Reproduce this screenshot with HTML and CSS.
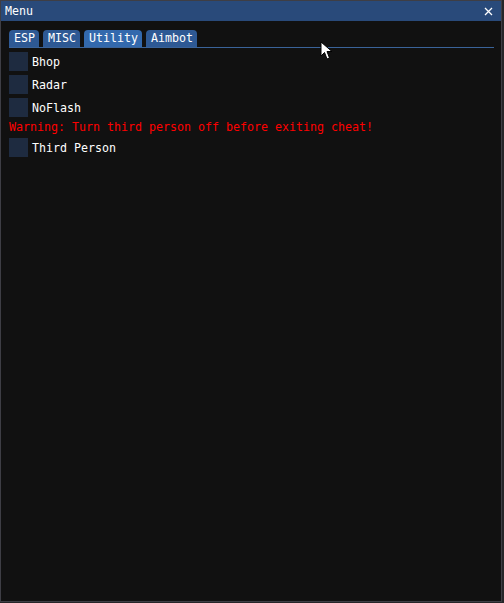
FILE: index.html
```html
<!DOCTYPE html>
<html>
<head>
<meta charset="utf-8">
<link rel="stylesheet" href="styles.css">
</head>
<body>
<div class="window">
  <div class="titlebar">
    <span class="title">Menu</span>
    <svg class="close" width="9" height="9" viewBox="0 0 9 9"><path d="M1 1L8 8M8 1L1 8" stroke="#fff" stroke-width="1.3"/></svg>
  </div>
  <div class="content">
    <div class="tabbar">
      <div class="tab">ESP</div>
      <div class="tab">MISC</div>
      <div class="tab active">Utility</div>
      <div class="tab">Aimbot</div>
    </div>
    <div class="items">
      <div class="row"><span class="box"></span><span>Bhop</span></div>
      <div class="row"><span class="box"></span><span>Radar</span></div>
      <div class="row"><span class="box"></span><span>NoFlash</span></div>
      <div class="warn">Warning: Turn third person off before exiting cheat!</div>
      <div class="row"><span class="box"></span><span>Third Person</span></div>
    </div>
  </div>
  <svg class="cursor" width="14" height="20" viewBox="0 0 14 20"><path d="M1 1L1 15L4.5 11.5L7 18L9.5 17L7 10.5L12 10.5Z" fill="#fff" stroke="#000" stroke-width="1"/></svg>
</div>
</body>
</html>
```
FILE: styles.css
```css
html, body {
  margin: 0;
  padding: 0;
  background: #262629;
}
body {
  width: 504px;
  height: 603px;
  overflow: hidden;
  font-family: "DejaVu Sans Mono", "Liberation Mono", monospace;
  font-size: 11.63px;
  color: #ffffff;
}
.window {
  position: relative;
  width: 502px;
  height: 602px;
  box-sizing: border-box;
  border: 1px solid #3e3e45;
  background: #111111;
  display: flex;
  flex-direction: column;
}
.titlebar {
  height: 20px;
  background: #294a7a;
  display: flex;
  align-items: center;
  justify-content: space-between;
  padding: 0 8px 0 4px;
  flex-shrink: 0;
}
.title {
  line-height: 13px;
}
.close {
  display: block;
}
.content {
  padding: 8px 7px 8px 8px;
  display: flex;
  flex-direction: column;
}
.tabbar {
  display: flex;
  gap: 4px;
  height: 18px;
  align-items: flex-end;
  border-bottom: 1px solid #3a6399;
}
.tab {
  height: 17px;
  line-height: 17px;
  padding: 0 4px 0 5px;
  background: #2e5994;
  border-radius: 4px 4px 0 0;
  white-space: nowrap;
}
.tab.active {
  background: #3369ad;
}
.items {
  display: flex;
  flex-direction: column;
  gap: 4px;
  margin-top: 4px;
}
.row {
  display: flex;
  align-items: center;
  gap: 4px;
  height: 19px;
}
.box {
  width: 19px;
  height: 19px;
  background: #1e2b40;
  flex-shrink: 0;
}
.warn {
  color: #ff0000;
  height: 13px;
  line-height: 13px;
  white-space: nowrap;
}
.cursor {
  position: absolute;
  left: 319px;
  top: 40px;
}
```
